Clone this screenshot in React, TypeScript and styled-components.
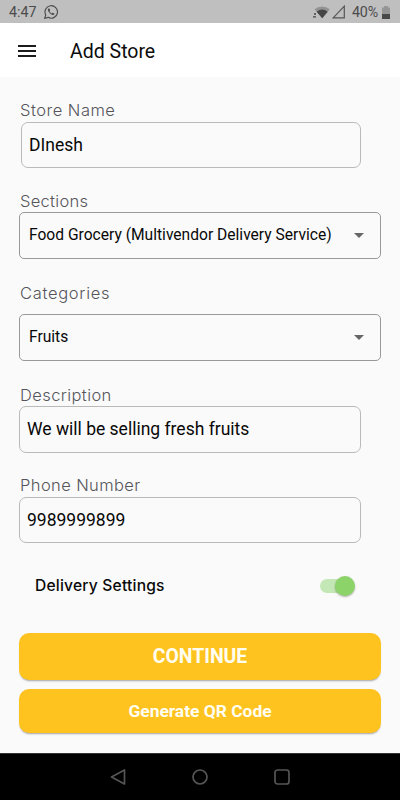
import React, { useState } from 'react';
import styled, { createGlobalStyle } from 'styled-components';

const GlobalStyle = createGlobalStyle`
  * { box-sizing: border-box; }
  body { margin: 0; background: #fafafa; font-family: Roboto, sans-serif; }
`;

const Screen = styled.div`
  width: 400px;
  height: 800px;
  display: flex;
  flex-direction: column;
  background: #fafafa;
  overflow: hidden;
`;

const StatusBar = styled.div`
  height: 23px;
  flex: none;
  display: flex;
  align-items: center;
  padding: 1px 10px 0 9px;
  background: #bfbfbf;
  color: #4c4c4c;
  font-size: 14.3px;
  line-height: 22px;
`;

const StatusIcons = styled.div`
  margin-left: auto;
  display: flex;
  align-items: center;
`;

const Percent = styled.span`
  margin: 0 4px 0 6px;
  letter-spacing: -0.15px;
`;

const WhatsApp = styled.svg`
  margin-left: 7px;
`;

const AppBar = styled.header`
  height: 54px;
  flex: none;
  display: flex;
  align-items: center;
  padding: 0 18px;
  background: #fff;
`;

const MenuButton = styled.button`
  width: 18px;
  height: 12px;
  margin-top: 2px;
  padding: 0;
  border: 0;
  background: none;
  display: flex;
  flex-direction: column;
  justify-content: space-between;
`;

const MenuLine = styled.span`
  width: 18px;
  height: 2px;
  background: #1c1c1c;
`;

const Title = styled.h1`
  margin: 2px 0 0 34px;
  font-size: 19.5px;
  font-weight: 400;
  color: #0c0c0c;
`;

const Form = styled.main`
  flex: 1;
  display: flex;
  flex-direction: column;
  padding: 23px 19px 0;
`;

const Field = styled.div<{ $height: number }>`
  height: ${(p) => p.$height}px;
  display: flex;
  flex-direction: column;
`;

const Label = styled.label<{ $spacing: number; $gap: number }>`
  height: 20px;
  margin: 0 0 ${(p) => p.$gap}px 1px;
  font: 300 16.5px/20px Inter, sans-serif;
  letter-spacing: ${(p) => p.$spacing}px;
  color: #55555b;
  white-space: nowrap;
`;

const Input = styled.input<{ $inset?: number; $height?: number }>`
  width: ${(p) => 342 - (p.$inset ?? 0)}px;
  height: ${(p) => p.$height ?? 46}px;
  margin-left: ${(p) => p.$inset ?? 0}px;
  padding: 0 7px 1px;
  border: 1px solid #bababa;
  border-radius: 7px;
  outline: 0;
  background: transparent;
  font: 400 17.5px Roboto, sans-serif;
  color: #080808;
`;

const Select = styled.div`
  width: 362px;
  height: 47px;
  display: flex;
  align-items: center;
  justify-content: space-between;
  padding: 0 16px 2px 9px;
  border: 1px solid #999;
  border-radius: 5px;
  font-size: 15.6px;
  color: #080808;
  white-space: nowrap;
`;

const Arrow = styled.span`
  border: 5px solid transparent;
  border-top-color: #666;
  border-bottom: 0;
  margin-top: 1px;
`;

const SettingRow = styled.div`
  height: 42px;
  display: flex;
  align-items: center;
  justify-content: space-between;
  padding: 0 27px 0 16px;
  margin-bottom: 26px;
`;

const SettingName = styled.span`
  font: 500 15.6px/20px Inter, sans-serif;
  letter-spacing: 0.2px;
  color: #090909;
  white-space: nowrap;
`;

const Track = styled.button<{ $on: boolean }>`
  width: 34px;
  height: 14px;
  display: flex;
  align-items: center;
  justify-content: ${(p) => (p.$on ? 'flex-end' : 'flex-start')};
  padding: 0;
  border: 0;
  border-radius: 7px;
  background: ${(p) => (p.$on ? '#c4e8b5' : '#bbb')};
`;

const Thumb = styled.span<{ $on: boolean }>`
  flex: none;
  width: 20px;
  height: 20px;
  margin-right: -1px;
  border-radius: 50%;
  background: ${(p) => (p.$on ? '#8cd46a' : '#f5f5f5')};
  box-shadow: 0 1px 2px rgba(0, 0, 0, 0.3);
`;

const Action = styled.button<{ $height: number; $size: number }>`
  width: 362px;
  height: ${(p) => p.$height}px;
  flex: none;
  margin-bottom: 9px;
  padding: 0;
  border: 0;
  border-radius: 10px;
  background: #ffc320;
  box-shadow: 0 2px 2px -1px rgba(0, 0, 0, 0.35);
  color: #fffef0;
  font: 700 ${(p) => p.$size}px Roboto, sans-serif;
`;

const NavBar = styled.nav`
  height: 47px;
  flex: none;
  display: flex;
  align-items: center;
  justify-content: center;
  gap: 66px;
  border-top: 1px solid #333;
  background: #000;
`;

const App = () => {
  const [on, setOn] = useState(true);
  return (
    <Screen>
      <GlobalStyle />
      <StatusBar>
        <span>4:47</span>
        <WhatsApp width="14" height="14" viewBox="0 0 24 24" fill="none" stroke="#4c4c4c" strokeWidth="2">
          <path d="M1.3 22.7 3 17a10.700 10.700 0 1 1 4.100 4.200Z" />
          <path d="M7.500 6.200c-1.500 1.500-1.200 4 1.800 7.200s6 4.800 8 3.200l.6-1.900-3.200-1.600-1.300 1.500c-2-.9-3.200-2.200-4-3.800l1.200-1.400-1.300-3.200Z" fill="#4c4c4c" stroke="none" />
        </WhatsApp>
        <StatusIcons>
          <svg width="18" height="13" viewBox="0 0 18 13">
            <path d="M1.500 3.200a12.300 12.300 0 0 1 15.300 0L9.200 12.300Z" fill="#929292" />
            <path d="M3.700 5.700a9 9 0 0 1 11 0l-5.500 6.600Z" fill="#454545" />
            <path d="M1 8h2M0 10.900h3" stroke="#454545" strokeWidth="1.300" />
          </svg>
          <svg width="15" height="14" viewBox="0 0 15 14">
            <path d="M13.300 1.200v11.600H2.200Z" fill="none" stroke="#555" strokeWidth="1.200" />
          </svg>
          <Percent>40%</Percent>
          <svg width="8" height="13" viewBox="0 0 8 13">
            <path d="M0 1.500h2V0h4v1.500h2V8H0Z" fill="#969696" />
            <path d="M0 8h8v5H0Z" fill="#484848" />
          </svg>
        </StatusIcons>
      </StatusBar>
      <AppBar>
        <MenuButton aria-label="Menu"><MenuLine /><MenuLine /><MenuLine /></MenuButton>
        <Title>Add Store</Title>
      </AppBar>
      <Form>
        <Field $height={91}>
          <Label $spacing={0.5} $gap={2}>Store Name</Label>
          <Input $inset={2} defaultValue="DInesh" />
        </Field>
        <Field $height={92}>
          <Label $spacing={0.3} $gap={1}>Sections</Label>
          <Select>Food Grocery (Multivendor Delivery Service)<Arrow /></Select>
        </Field>
        <Field $height={102}>
          <Label $spacing={0.7} $gap={11}>Categories</Label>
          <Select>Fruits<Arrow /></Select>
        </Field>
        <Field $height={90}>
          <Label $spacing={0.4} $gap={1}>Description</Label>
          <Input $height={47} defaultValue="We will be selling fresh fruits" />
        </Field>
        <Field $height={90}>
          <Label $spacing={0.4} $gap={2}>Phone Number</Label>
          <Input defaultValue="9989999899" />
        </Field>
        <SettingRow>
          <SettingName>Delivery Settings</SettingName>
          <Track role="switch" aria-checked={on} aria-label="Delivery Settings" $on={on} onClick={() => setOn(!on)}>
            <Thumb $on={on} />
          </Track>
        </SettingRow>
        <Action $height={47} $size={19.4}>CONTINUE</Action>
        <Action $height={44} $size={17.4}>Generate QR Code</Action>
      </Form>
      <NavBar>
        <svg width="16" height="16" viewBox="0 0 16 16" fill="none" stroke="#555" strokeWidth="1.700" strokeLinejoin="round">
          <path d="M14.500 1v14L1.500 8Z" />
        </svg>
        <svg width="16" height="16" viewBox="0 0 16 16" fill="none" stroke="#555" strokeWidth="1.700">
          <circle cx="8" cy="8" r="7" />
        </svg>
        <svg width="16" height="16" viewBox="0 0 16 16" fill="none" stroke="#555" strokeWidth="1.700">
          <rect x="1" y="1" width="14" height="14" rx="2.500" />
        </svg>
      </NavBar>
    </Screen>
  );
};

export default App;
